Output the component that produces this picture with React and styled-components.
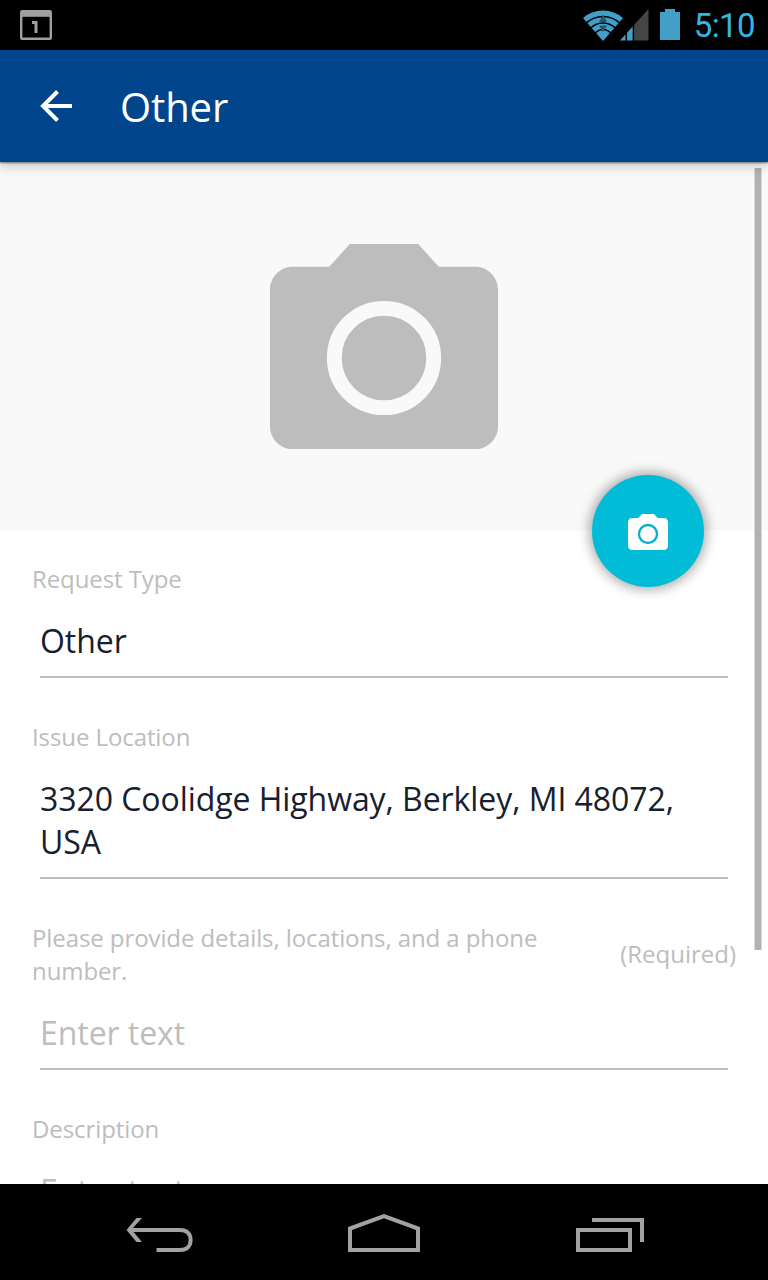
import React from "react";
import styled, { createGlobalStyle } from "styled-components";

const GlobalStyle = createGlobalStyle`
  * { box-sizing: border-box; }
  body { margin: 0; background: #000; overflow: hidden; }
`;

const Screen = styled.div`
  width: 768px;
  height: 1280px;
  display: flex;
  flex-direction: column;
  overflow: hidden;
  background: #fff;
  font-family: "Open Sans", sans-serif;
  svg { display: block; flex: none; }
`;

const StatusBar = styled.header`
  flex: none;
  height: 50px;
  padding: 0 13px 0 20px;
  display: flex;
  align-items: center;
  justify-content: space-between;
  background: #000;
`;

const StatusIcons = styled.div`
  display: flex;
  align-items: center;
`;

const Clock = styled.time`
  margin-left: 14px;
  font: 400 33px/48px Roboto, sans-serif;
  color: #33b5e5;
  letter-spacing: -0.6px;
  padding-top: 2px;
`;

const AppBar = styled.div`
  flex: none;
  position: relative;
  z-index: 2;
  height: 112px;
  padding: 0 40px;
  display: flex;
  align-items: center;
  gap: 48px;
  background: #00458b;
  box-shadow: 0 1px 2px rgba(0, 0, 0, 0.5), 0 4px 12px rgba(0, 0, 0, 0.2);
`;

const Title = styled.h1`
  margin: 0;
  padding-top: 1px;
  font-size: 40px;
  font-weight: 400;
  line-height: 54px;
  letter-spacing: -0.1px;
  color: #fff;
`;

const Content = styled.main`
  flex: 1;
  min-height: 0;
  position: relative;
  overflow: hidden;
  background: #fff;
`;

const PhotoArea = styled.section`
  position: relative;
  height: 368px;
  padding-top: 1px;
  display: flex;
  align-items: center;
  justify-content: center;
  background: #f9f9f9;
`;

const CameraButton = styled.button`
  position: absolute;
  right: 64px;
  bottom: -57px;
  width: 112px;
  height: 112px;
  padding: 2px 0 0;
  border: 0;
  border-radius: 50%;
  display: flex;
  align-items: center;
  justify-content: center;
  background: #00bcd6;
  box-shadow: 0 0 12px 3px rgba(0, 0, 0, 0.32);
`;

const Form = styled.form`
  padding: 32px 32px 0;
  display: flex;
  flex-direction: column;
  gap: 42px;
`;

const FieldBox = styled.div`
  display: flex;
  flex-direction: column;
  gap: 24px;
`;

const LabelRow = styled.div`
  display: flex;
  align-items: center;
  justify-content: space-between;
  gap: 32px;
  font-size: 24px;
  line-height: 33px;
  letter-spacing: -0.09px;
  color: #bdbdbd;
`;

const Required = styled.span`
  flex: none;
  padding-bottom: 2px;
  letter-spacing: 0;
`;

const Value = styled.div`
  margin: 0 8px;
  padding-bottom: 14px;
  border-bottom: 2px solid #bdbdbd;
  font-size: 32px;
  line-height: 43px;
  letter-spacing: -0.06px;
  color: ${(p) => (p.$placeholder ? "#bdbdbd" : "#17202e")};
`;

const ScrollThumb = styled.div`
  position: absolute;
  z-index: 1;
  top: 6px;
  right: 6px;
  width: 8px;
  height: 782px;
  background: #b2b2b2;
  border: solid rgba(255, 255, 255, 0.5);
  border-width: 0 1px;
`;

const NavBar = styled.nav`
  flex: none;
  height: 96px;
  padding: 0 46px;
  display: grid;
  grid-template-columns: repeat(3, 1fr);
  align-items: center;
  justify-items: center;
  background: #000;
`;

function CameraIcon({ width, color, lens, ring, thickness }) {
  return (
    <svg width={width} height={width * 0.9} viewBox="0 0 20 18" fill={color}>
      <path d="M7 0 5.2 2H2C.9 2 0 2.9 0 4v12c0 1.1.9 2 2 2h16c1.1 0 2-.9 2-2V4c0-1.1-.9-2-2-2h-3.2L13 0z" />
      <circle cx="10" cy="10" r={lens} fill="none" stroke={ring} strokeWidth={thickness} />
    </svg>
  );
}

function CalendarIcon() {
  return (
    <svg width="32" height="30" viewBox="0 0 32 30" fill="none" stroke="#a0a0a0">
      <rect x="1.2" y="1.2" width="29.6" height="27.6" rx="1" strokeWidth="2.4" />
      <path d="M1 4h30" strokeWidth="5.6" />
      <path d="M12 12.4h4V23" strokeWidth="3" />
    </svg>
  );
}

function WifiIcon() {
  return (
    <svg width="40" height="31" viewBox="0 0 40 31">
      <path d="M20 31 0 8Q8.500 .5 20 .5T40 8z" fill="#419fc8" />
      <path d="M2 14Q10 6.500 20 6.500T38 14M6.500 19Q12.500 13 20 13T33.500 19M11 24Q15.500 19.500 20 19.500T29 24" fill="none" stroke="#000" strokeWidth="1.6" />
      <path d="m20 5 4 7h-8zM16 15.500h8L20 22z" fill="#24576e" />
    </svg>
  );
}

function SignalIcon() {
  return (
    <svg width="29" height="32" viewBox="0 0 29 32">
      <path d="M28.500 0v31.500H14V16z" fill="#454545" />
      <path d="M14 16v15.500H0z" fill="#419fc8" />
      <path d="M6.300 22v10M13.400 14v18" stroke="#000" strokeWidth="1.5" />
    </svg>
  );
}

function BatteryIcon() {
  return (
    <svg width="20" height="31" viewBox="0 0 20 31" fill="#419fc8">
      <path d="M5 0h10v3h5v28H0V3h5z" />
    </svg>
  );
}

function BackArrow() {
  return (
    <svg width="32" height="32" viewBox="0 0 32 32" fill="none" stroke="#fff" strokeWidth="4">
      <path d="M32 16H3M17.500 1.500 3 16l14.500 14.500" />
    </svg>
  );
}

function NavBack() {
  return (
    <svg width="68" height="38" viewBox="0 0 68 38" fill="none" stroke="#a2a2a2" strokeWidth="4">
      <path d="M4 14H54C61 14 64.600 18 64.600 24S61 34 54 34H30.500" />
      <path d="M10.500 2H16L5.500 13.500 16 26H10.500L.500 14z" fill="#a2a2a2" stroke="none" />
    </svg>
  );
}

function NavHome() {
  return (
    <svg width="72" height="38" viewBox="0 0 72 38" fill="none" stroke="#a2a2a2" strokeWidth="4">
      <path d="M2 36V14.500L36 2.200 70 14.500V36z" />
    </svg>
  );
}

function NavRecent() {
  return (
    <svg width="68" height="34" viewBox="0 0 68 34" fill="none" stroke="#a2a2a2" strokeWidth="4">
      <path d="M2 12h52v20H2zM16 2h50v22" />
    </svg>
  );
}

const NavItem = styled.div`
  padding-top: ${(p) => p.$drop}px;
  transform: translateX(${(p) => p.$shift || 0}px);
`;

const Spaced = styled.span`
  display: block;
  margin-left: ${(p) => p.$left}px;
  padding-bottom: ${(p) => p.$raise || 0}px;
`;

function Field({ label, value, placeholder, required }) {
  return (
    <FieldBox>
      <LabelRow>
        <span>{label}</span>
        {required && <Required>(Required)</Required>}
      </LabelRow>
      <Value $placeholder={!value}>{value || placeholder}</Value>
    </FieldBox>
  );
}

export default function App() {
  return (
    <Screen>
      <GlobalStyle />
      <StatusBar>
        <CalendarIcon />
        <StatusIcons>
          <WifiIcon />
          <Spaced $left={-3}><SignalIcon /></Spaced>
          <Spaced $left={11} $raise={2}><BatteryIcon /></Spaced>
          <Clock>5:10</Clock>
        </StatusIcons>
      </StatusBar>
      <AppBar>
        <BackArrow />
        <Title>Other</Title>
      </AppBar>
      <Content>
        <PhotoArea>
          <CameraIcon width={228} color="#bdbdbd" lens={4.36} ring="#f9f9f9" thickness={1.3} />
          <CameraButton type="button" aria-label="Add photo">
            <CameraIcon width={40} color="#fff" lens={4.5} ring="#08b0ca" thickness={1.15} />
          </CameraButton>
        </PhotoArea>
        <Form>
          <Field label="Request Type" value="Other" />
          <Field label="Issue Location" value="3320 Coolidge Highway, Berkley, MI 48072, USA" />
          <Field
            label="Please provide details, locations, and a phone number."
            placeholder="Enter text"
            required
          />
          <Field label="Description" placeholder="Enter text" />
        </Form>
        <ScrollThumb />
      </Content>
      <NavBar>
        <NavItem $drop={5} $shift={1}><NavBack /></NavItem>
        <NavItem $drop={2}><NavHome /></NavItem>
        <NavItem $drop={6} $shift={1}><NavRecent /></NavItem>
      </NavBar>
    </Screen>
  );
}
